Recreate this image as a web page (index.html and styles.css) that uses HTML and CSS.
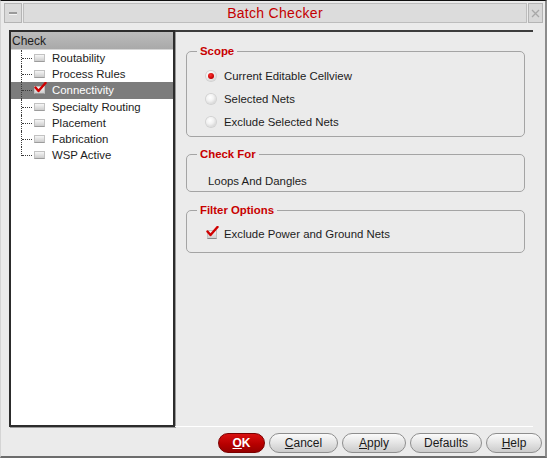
FILE: index.html
```html
<!DOCTYPE html>
<html>
<head>
<meta charset="utf-8">
<link rel="stylesheet" href="styles.css">
</head>
<body>
<div class="window">
  <div class="titlebar">
    <div class="tb-menu"><span class="dash"></span></div>
    <div class="tb-title">Batch Checker</div>
    <div class="tb-close">
      <svg width="9" height="9" viewBox="0 0 9 9"><path d="M1 1 L8 8 M8 1 L1 8" stroke="#a8a8a8" stroke-width="1.3" fill="none"/></svg>
    </div>
  </div>
  <div class="main">
    <div class="tree">
      <div class="tree-header">Check</div>
      <div class="tree-row"><span class="branch"></span><span class="cb"></span><span class="label">Routability</span></div>
      <div class="tree-row"><span class="branch"></span><span class="cb"></span><span class="label">Process Rules</span></div>
      <div class="tree-row selected"><span class="branch"></span><span class="cb checked"><svg width="13" height="11" viewBox="0 0 13 11"><path d="M1.5 5.5 L4.5 9 L11.5 1" stroke="#d00000" stroke-width="2.4" fill="none" stroke-linecap="round" stroke-linejoin="round"/></svg></span><span class="label">Connectivity</span></div>
      <div class="tree-row"><span class="branch"></span><span class="cb"></span><span class="label">Specialty Routing</span></div>
      <div class="tree-row"><span class="branch"></span><span class="cb"></span><span class="label">Placement</span></div>
      <div class="tree-row"><span class="branch"></span><span class="cb"></span><span class="label">Fabrication</span></div>
      <div class="tree-row last"><span class="branch"></span><span class="cb"></span><span class="label">WSP Active</span></div>
    </div>
    <div class="panel">
      <fieldset class="group scope">
        <legend>Scope</legend>
        <div class="opt"><span class="radio on"></span><span>Current Editable Cellview</span></div>
        <div class="opt"><span class="radio"></span><span>Selected Nets</span></div>
        <div class="opt"><span class="radio"></span><span>Exclude Selected Nets</span></div>
      </fieldset>
      <fieldset class="group checkfor">
        <legend>Check For</legend>
        <div class="plain">Loops And Dangles</div>
      </fieldset>
      <fieldset class="group filter">
        <legend>Filter Options</legend>
        <div class="opt"><span class="cb2"><svg width="13" height="11" viewBox="0 0 13 11"><path d="M1.5 5.5 L4.5 9 L11.5 1" stroke="#d00000" stroke-width="2.4" fill="none" stroke-linecap="round" stroke-linejoin="round"/></svg></span><span>Exclude Power and Ground Nets</span></div>
      </fieldset>
    </div>
  </div>
  <div class="buttons">
    <button class="btn ok"><u>O</u>K</button>
    <button class="btn cancel"><u>C</u>ancel</button>
    <button class="btn apply"><u>A</u>pply</button>
    <button class="btn defaults">Defaults</button>
    <button class="btn help"><u>H</u>elp</button>
  </div>
</div>
</body>
</html>
```
FILE: styles.css
```css
* { box-sizing: border-box; }
html, body { margin: 0; padding: 0; }
body {
  width: 547px;
  height: 458px;
  overflow: hidden;
  background: #ececec;
  font-family: "Liberation Sans", Arial, sans-serif;
  font-size: 11.4px;
  color: #1c1c1c;
}
.window {
  width: 547px;
  height: 458px;
  background: #ebebeb;
  border-top: 1px solid #101010;
  border-left: 1px solid #d4d4d4;
  border-right: 2px solid #8c8c8c;
  border-bottom: 2px solid #6c6c6c;
  display: flex;
  flex-direction: column;
}
.titlebar {
  display: flex;
  height: 20px;
  margin: 2px 2px 0 3px;
}
.tb-menu {
  width: 18px;
  background: #dadada;
  border: 1px solid #b4b4b4;
  display: flex;
  align-items: center;
  justify-content: center;
}
.dash { width: 8px; height: 2px; background: #9a9a9a; border-bottom: 1px solid #f4f4f4; box-sizing: content-box; }
.tb-title {
  flex: 1;
  margin-left: 1px;
  background: #dcdcdc;
  border: 1px solid #bdbdbd;
  color: #c40000;
  font-size: 14px;
  text-align: center;
  line-height: 18px;
  letter-spacing: 0.3px;
}
.tb-close {
  width: 15px;
  margin-left: 1px;
  background: #d8d8d8;
  border: 1px solid #b4b4b4;
  display: flex;
  align-items: center;
  justify-content: center;
}
.main {
  display: flex;
  height: 397px;
  margin: 7px 0 0 8px;
}
.tree {
  width: 166px;
  background: #fff;
  border: 2px solid #2c2c2c;
  box-shadow: 1px 1px 0 #9a9a9a;
}
.tree-header {
  height: 18px;
  line-height: 18px;
  padding-left: 1px;
  font-size: 12px;
  color: #202020;
  background: linear-gradient(#bcbcbc, #a9a9a9);
  border-bottom: 1px solid #d6d6d6;
}
.tree-row {
  display: flex;
  align-items: center;
  height: 16.2px;
}
.tree-row.selected { background: #7c7c7c; color: #fff; }
.branch {
  position: relative;
  width: 11px;
  height: 100%;
  margin-left: 10px;
  flex: none;
}
.branch::before {
  content: "";
  position: absolute;
  left: 0; top: 0; bottom: 0;
  border-left: 1px dotted #3a3a3a;
}
.branch::after {
  content: "";
  position: absolute;
  left: 1px; right: 0; top: 8px;
  border-top: 1px dotted #3a3a3a;
}
.tree-row.last .branch::before { bottom: 7px; }
.cb {
  width: 11px;
  height: 8px;
  margin-left: 2px;
  margin-right: 7px;
  background: linear-gradient(#f6f6f6, #cdcdcd);
  border: 1px solid #c2c2c2;
  border-bottom-color: #9c9c9c;
  display: flex;
  align-items: center;
  justify-content: center;
  flex: none;
}
.cb svg, .cb2 svg { margin-top: -5px; margin-left: 1px; flex: none; }
.panel {
  width: 358px;
  border-top: 2px solid #3c3c3c;
  border-bottom: 1px solid #ffffff;
  padding: 0 8px 0 11px;
}
.group {
  margin: 0;
  padding: 0;
  border: 1px solid #a4a4a4;
  border-radius: 5px;
  min-width: 0;
}
.group legend {
  margin-left: 10px;
  padding: 0 3px;
  line-height: 14px;
  font-size: 11.4px;
  font-weight: bold;
  color: #c80000;
}
.scope { margin-top: 12px; padding-bottom: 3px; }
.scope .opt:first-of-type { margin-top: 6px; }
.opt {
  display: flex;
  align-items: center;
  height: 23px;
  padding-left: 19px;
}
.radio {
  width: 10px;
  height: 10px;
  border-radius: 50%;
  margin-right: 8px;
  background: radial-gradient(circle at 40% 35%, #ffffff 0, #f2f2f2 40%, #c4c4c4 100%);
  box-shadow: 0 0 0 1px #d2d2d2;
  display: flex;
  align-items: center;
  justify-content: center;
  flex: none;
}
.radio.on::after {
  content: "";
  width: 6px;
  height: 6px;
  border-radius: 50%;
  background: radial-gradient(circle at 40% 35%, #ff3030, #c00000 70%);
}
.checkfor { margin-top: 10px; padding-bottom: 2px; }
.plain { height: 16px; line-height: 16px; margin-top: 12px; padding-left: 21px; }
.filter { margin-top: 11px; padding-bottom: 10px; }
.filter .opt { height: 16px; margin-top: 9px; padding-left: 20px; }
.cb2 {
  width: 10px;
  height: 9px;
  margin-right: 7px;
  background: linear-gradient(#f4f4f4, #cfcfcf);
  border: 1px solid #c2c2c2;
  border-bottom-color: #8a8a8a;
  display: flex;
  align-items: center;
  justify-content: center;
  flex: none;
}
.buttons {
  display: flex;
  justify-content: flex-end;
  gap: 4px;
  margin-top: 6px;
  padding-right: 3px;
}
.btn {
  height: 20px;
  border-radius: 10px;
  border: 1px solid #8e8e8e;
  background: linear-gradient(#fbfbfb, #e4e4e4 50%, #cbcbcb);
  font-family: "Liberation Sans", Arial, sans-serif;
  font-size: 12px;
  color: #1a1a1a;
  padding: 0;
  line-height: 18px;
}
.btn u { text-decoration-thickness: 1px; text-underline-offset: 1px; }
.ok { width: 47px; background: linear-gradient(#d81010, #b80000 55%, #960000); border-color: #7a0000; color: #fff; font-weight: bold; }
.cancel { width: 69px; }
.apply { width: 64px; }
.defaults { width: 72px; }
.help { width: 56px; }
```
